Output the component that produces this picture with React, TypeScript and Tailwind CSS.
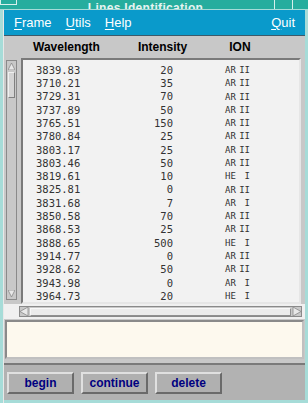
import React from "react";

const rows: [string, string, string, string][] = [
  ["3839.83", "20", "AR", "II"],
  ["3710.21", "35", "AR", "II"],
  ["3729.31", "70", "AR", "II"],
  ["3737.89", "50", "AR", "II"],
  ["3765.51", "150", "AR", "II"],
  ["3780.84", "25", "AR", "II"],
  ["3803.17", "25", "AR", "II"],
  ["3803.46", "50", "AR", "II"],
  ["3819.61", "10", "HE", "I"],
  ["3825.81", "0", "AR", "II"],
  ["3831.68", "7", "AR", "I"],
  ["3850.58", "70", "AR", "II"],
  ["3868.53", "25", "AR", "II"],
  ["3888.65", "500", "HE", "I"],
  ["3914.77", "0", "AR", "II"],
  ["3928.62", "50", "AR", "II"],
  ["3943.98", "0", "AR", "I"],
  ["3964.73", "20", "HE", "I"],
];

const Menu = ({ label }: { label: string }) => (
  <span>
    <span className="underline underline-offset-2">{label[0]}</span>
    {label.slice(1)}
  </span>
);

const Btn = ({ label }: { label: string }) => (
  <button className="w-[67px] h-[22px] bg-[#b0b0b0] border-2 border-t-[#e0e0e0] border-l-[#e0e0e0] border-b-[#6a6a6a] border-r-[#6a6a6a] text-[#000080] font-bold text-[12px] leading-none">
    {label}
  </button>
);

export default function App() {
  return (
    <div
      className="w-[308px] h-[403px] bg-[#a6dcd8] overflow-hidden flex flex-col"
      style={{ fontFamily: '"Liberation Sans", Arial, sans-serif' }}
    >
      {/* title bar */}
      <div className="h-[9px] bg-[#26ad9e] flex items-end relative overflow-hidden shrink-0">
        <div className="w-[17px] h-[5px] self-start bg-[#26ad9e] border border-[#d8f0ec] border-t-0" />
        <div className="flex-1 text-center text-[#e8f4f2] text-[12px] font-bold leading-none mb-[-5px] tracking-wide">
          Lines Identification
        </div>
        <div className="w-[18px] h-[9px] border-l border-[#d8f0ec]" />
        <div className="w-[16px] h-[9px] border-l border-[#d8f0ec]" />
      </div>

      <div className="flex-1 ml-[3px] mr-[3px] mt-[1px] flex flex-col bg-[#c8c8c8] border-l border-[#e8e8e8]">
        {/* menu bar */}
        <div className="h-[26px] bg-[#0a9acb] border-b border-[#3c5a6a] flex items-center text-white text-[13px] pl-[10px] pr-[10px] shrink-0">
          <div className="flex gap-[14px]">
            <Menu label="Frame" />
            <Menu label="Utils" />
            <Menu label="Help" />
          </div>
          <div className="ml-auto">
            <Menu label="Quit" />
          </div>
        </div>

        {/* header */}
        <div className="h-[22px] flex items-center text-[12px] font-bold text-black shrink-0">
          <span className="ml-[29px]">Wavelength</span>
          <span className="ml-[38px]">Intensity</span>
          <span className="ml-[42px]">ION</span>
        </div>

        {/* list */}
        <div className="flex h-[246px] shrink-0">
          <div className="w-[11px] ml-[2px] mt-[2px] mb-[4px] bg-[#c8c8c8] border border-[#8a8a8a] flex flex-col">
            <div className="h-[11px] flex items-center justify-center">
              <svg width="7" height="7" viewBox="0 0 7 7">
                <polygon points="3.5,0 7,7 0,7" fill="#e8e8e8" stroke="#8a8a8a" strokeWidth="0.8" />
              </svg>
            </div>
            <div className="h-[26px] mx-[1px] bg-[#d4d4d4] border border-t-[#f0f0f0] border-l-[#f0f0f0] border-b-[#808080] border-r-[#808080]" />
            <div className="flex-1" />
            <div className="h-[11px] flex items-center justify-center">
              <svg width="7" height="7" viewBox="0 0 7 7">
                <polygon points="0,0 7,0 3.5,7" fill="#e8e8e8" stroke="#8a8a8a" strokeWidth="0.8" />
              </svg>
            </div>
          </div>
          <div className="ml-[4px] mr-[4px] flex-1 bg-[#f2f2f2] border-2 border-t-[#7a7a7a] border-l-[#7a7a7a] border-b-[#e6e6e6] border-r-[#e6e6e6] pt-[4px] overflow-hidden"
            style={{ fontFamily: '"DejaVu Sans Mono", "Liberation Mono", monospace' }}
          >
            {rows.map((r, i) => (
              <div key={i} className="flex h-[13.3px] items-center text-[10.5px] text-[#333] whitespace-nowrap">
                <span className="ml-[13px] w-[46px] shrink-0">{r[0]}</span>
                <span className="w-[91px] shrink-0 text-right">{r[1]}</span>
                <span className="ml-[52px] w-[12px] shrink-0 text-[9px]">{r[2]}</span>
                <span className="w-[13px] shrink-0 text-right text-[9px]">{r[3]}</span>
              </div>
            ))}
          </div>
        </div>

        {/* horizontal scrollbar */}
        <div className="h-[15px] flex items-center shrink-0 bg-[#f0f0f0]">
          <div className="ml-[15px] mr-[3px] flex-1 h-[11px] bg-[#c8c8c8] border border-[#8a8a8a] flex items-center">
            <svg width="9" height="9" viewBox="0 0 9 9">
              <polygon points="0,4.5 8,0 8,9" fill="#e8e8e8" stroke="#8a8a8a" strokeWidth="0.8" />
            </svg>
            <div className="flex-1 h-[8px] mx-[1px] bg-[#ececec] border border-t-[#f8f8f8] border-l-[#f8f8f8] border-b-[#909090] border-r-[#909090]" />
            <svg width="9" height="9" viewBox="0 0 9 9">
              <polygon points="9,4.5 1,0 1,9" fill="#e8e8e8" stroke="#8a8a8a" strokeWidth="0.8" />
            </svg>
          </div>
        </div>

        {/* message box */}
        <div className="h-[39px] mx-[1px] mt-[1px] bg-[#fdf9ee] border-2 border-t-[#8a8a8a] border-l-[#8a8a8a] border-b-[#c0c0c0] border-r-[#c0c0c0] shrink-0" />

        {/* separator + buttons */}
        <div className="h-[5px] mt-[1px] border-b-2 border-[#7a7a7a] bg-[#c8c8c8] shrink-0" />
        <div className="flex-1 bg-[#b2b2b2] flex items-start gap-[7px] pl-[3px] pt-[7px]">
          <Btn label="begin" />
          <Btn label="continue" />
          <Btn label="delete" />
        </div>
        <div className="h-[3px] bg-[#a6dcd8] shrink-0" />
      </div>
    </div>
  );
}
